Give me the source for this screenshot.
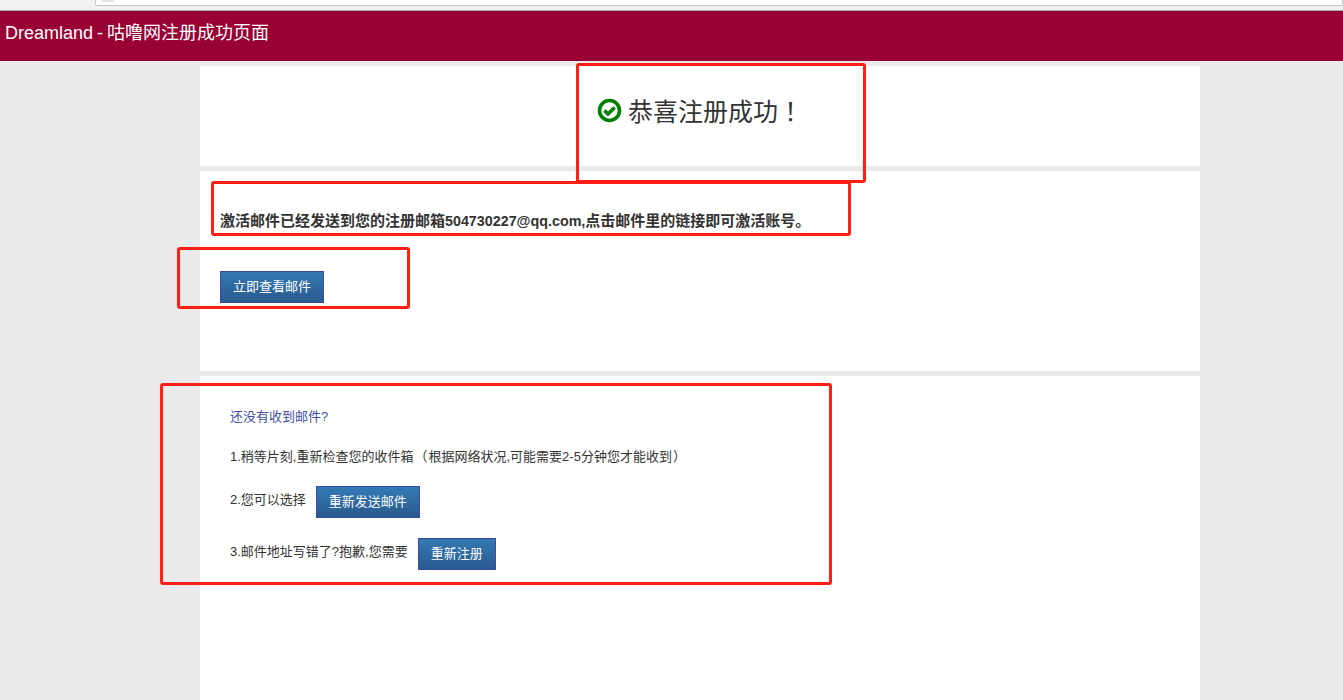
<div class="page">
    <div class="chrome">
        <div class="address"><i class="favicon"></i></div>
    </div>
    <header class="topbar">Dreamland - 咕噜网注册成功页面</header>

    <main class="wrap">
        <section class="panel panel-title">
            <h1>
                <svg class="ok" width="25" height="25" viewBox="0 0 25 25" aria-hidden="true">
                    <circle cx="12.5" cy="12.5" r="10" fill="none" stroke="#008000" stroke-width="3.6" />
                    <path d="M7.4 12.4l3.6 3.6 6.6-6.6" fill="none" stroke="#008000" stroke-width="3.6" />
                </svg>
                <span class="tc">恭喜注册成功！</span>
            </h1>
        </section>

        <section class="panel panel-mail">
            <p class="notice">激活邮件已经发送到您的注册邮箱<span class="latin">504730227@qq.com,</span>点击邮件里的链接即可激活账号。</p>
            <button class="btn">立即查看邮件</button>
        </section>

        <section class="panel panel-help">
            <p class="ask">还没有收到邮件?</p>
            <p class="line1">1.稍等片刻,重新检查您的收件箱<span class="tc paren">（</span>根据网络状况,可能需要2-5分钟您才能收到<span class="tc paren">）</span></p>
            <div class="line2"><span>2.您可以选择</span><button class="btn">重新发送邮件</button></div>
            <div class="line3"><span>3.邮件地址写错了?抱歉,您需要</span><button class="btn">重新注册</button></div>
        </section>
    </main>

    <div class="mark mark-title"></div>
    <div class="mark mark-notice"></div>
    <div class="mark mark-btn"></div>
    <div class="mark mark-help"></div>
</div>

<style>
    :global(body) {
        margin: 0;
        background: #eaeaea;
    }

    .page {
        position: relative;
        height: 700px;
        overflow: hidden;
        font-family: "Liberation Sans", "Noto Sans CJK SC", sans-serif;
        color: #333;
    }

    .tc {
        font-family: "Liberation Sans", "Noto Sans CJK TC", sans-serif;
    }

    .chrome {
        height: 11px;
        box-sizing: border-box;
        padding-left: 95px;
        background: #f1f1f1;
        border-bottom: 1px solid #a9a9a9;
    }

    .address {
        height: 6px;
        box-sizing: border-box;
        padding-left: 6px;
        background: #fff;
        border: 1px solid #c4c4c4;
        border-top: 0;
        border-radius: 0 0 2px 2px;
    }

    .favicon {
        display: block;
        width: 12px;
        height: 2px;
        background: #e4e4e4;
    }

    .topbar {
        height: 50px;
        box-sizing: border-box;
        padding: 12px 5px 0;
        background: #990033;
        color: #fff;
        font-size: 18px;
        line-height: 20px;
        word-spacing: -1px;
    }

    .wrap {
        display: flex;
        flex-direction: column;
        gap: 5px;
        width: 1000px;
        margin: 5px 0 0 200px;
    }

    .panel {
        background: #fff;
    }

    .panel-title {
        height: 100px;
        box-sizing: border-box;
        padding: 30px 0 0 397px;
    }

    h1 {
        display: flex;
        align-items: center;
        gap: 6px;
        margin: 0;
        font-size: 25px;
        font-weight: 400;
        line-height: 32px;
    }

    .ok {
        margin-top: -4px;
    }

    .panel-mail {
        height: 200px;
        box-sizing: border-box;
        padding: 40px 20px 0;
    }

    .notice {
        margin: 0;
        font-size: 15px;
        line-height: 20px;
        font-weight: 700;
    }

    .latin {
        font-size: 14.3px;
    }

    .panel-mail .btn {
        margin-top: 40px;
    }

    .btn {
        display: block;
        height: 32px;
        box-sizing: border-box;
        padding: 0 12px;
        border: 1px solid #3b4ba5;
        border-radius: 0;
        background: linear-gradient(#3379b5, #2a5a8c);
        color: #fff;
        font-family: inherit;
        font-size: 13px;
        line-height: 30px;
    }

    .panel-help {
        height: 330px;
        box-sizing: border-box;
        padding: 31px 30px 0;
        font-size: 13px;
        line-height: 20px;
    }

    .panel-help p {
        margin: 0;
    }

    .panel-help .ask {
        color: #3f4fa8;
    }

    .panel-help .line1 {
        margin-top: 20px;
    }

    .paren {
        margin: 0 1px;
    }

    .line2,
    .line3 {
        display: flex;
        align-items: flex-start;
    }

    .line2 {
        margin-top: 19px;
    }

    .line2 span,
    .line3 span {
        margin-top: 4px;
    }

    .line2 .btn,
    .line3 .btn {
        margin-left: 10px;
    }

    .line3 {
        margin-top: 20px;
    }

    /* annotation boxes drawn over the screenshot */
    .mark {
        position: absolute;
        box-sizing: border-box;
        border: 3px solid #ff1f14;
        border-radius: 3px;
    }

    .mark-title {
        left: 576px;
        top: 63px;
        width: 290px;
        height: 120px;
    }

    .mark-notice {
        left: 211px;
        top: 181px;
        width: 640px;
        height: 55px;
    }

    .mark-btn {
        left: 177px;
        top: 247px;
        width: 233px;
        height: 62px;
    }

    .mark-help {
        left: 160px;
        top: 383px;
        width: 672px;
        height: 202px;
    }
</style>
